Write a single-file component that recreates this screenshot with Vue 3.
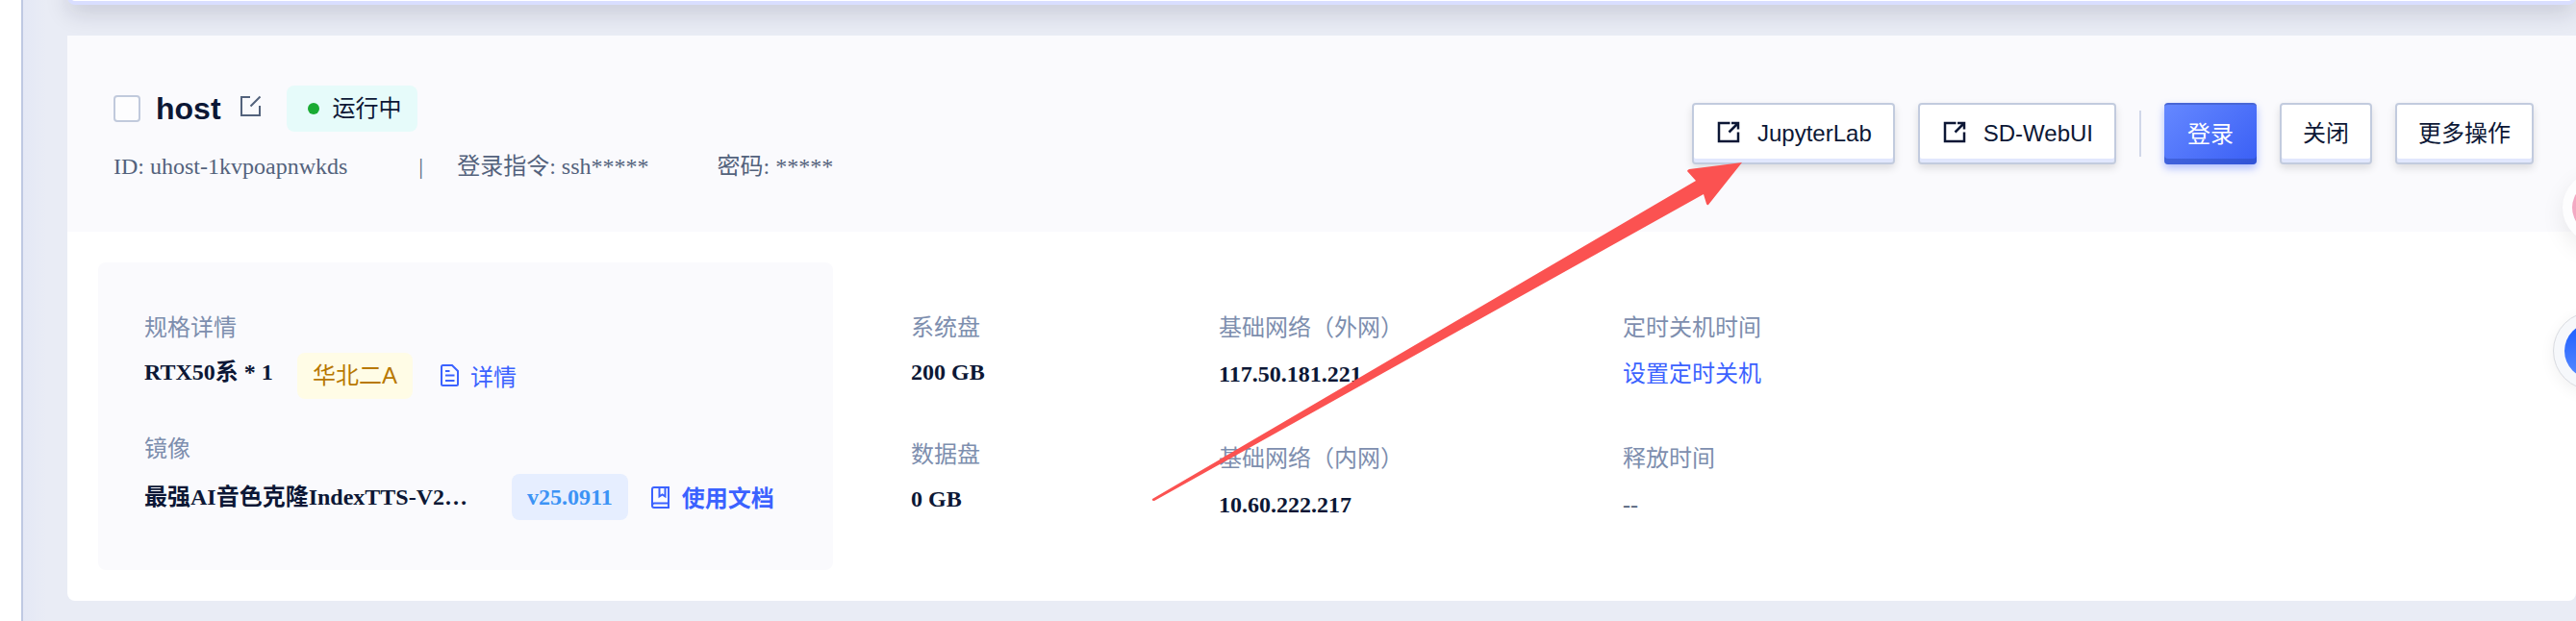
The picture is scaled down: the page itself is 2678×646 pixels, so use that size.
<script setup>
const disks = [
  { label: '系统盘', value: '200 GB' },
  { label: '数据盘', value: '0 GB' },
]
const networks = [
  { label: '基础网络（外网）', value: '117.50.181.221' },
  { label: '基础网络（内网）', value: '10.60.222.217' },
]
const tools = ['JupyterLab', 'SD-WebUI']
</script>

<template>
  <div class="page">
    <div class="rail"></div>
    <main class="content">
      <div class="previous-card"></div>

      <article class="card">
        <header class="card-header">
          <div class="identity">
            <div class="title-row">
              <input id="pick-host" class="pick" type="checkbox" aria-label="host" />
              <label for="pick-host" class="name">host</label>
              <button class="icon-button" type="button" aria-label="编辑">
                <svg class="icon" viewBox="0 0 28 28">
                  <path d="M14 2H5V21H24V11M14.500 11.500L24.500 1.500" />
                </svg>
              </button>
              <span class="status"><i class="dot"></i>运行中</span>
            </div>
            <div class="meta-row">
              <span>ID: uhost-1kvpoapnwkds</span>
              <span class="bar">|</span>
              <span class="command">登录指令: ssh*****</span>
              <span>密码: *****</span>
            </div>
          </div>

          <div class="actions">
            <button v-for="tool in tools" :key="tool" class="btn" type="button">
              <svg class="icon strong" viewBox="0 0 28 28">
                <path d="M15.500 3H4V22H24V12.500M14.500 12.500L23.500 3.500M17 3H24V9.500" />
              </svg>
              {{ tool }}
            </button>
            <span class="divider"></span>
            <button class="btn primary" type="button">登录</button>
            <button class="btn" type="button">关闭</button>
            <button class="btn" type="button">更多操作</button>
          </div>
        </header>

        <div class="card-body">
          <section class="spec">
            <div class="label">规格详情</div>
            <div class="spec-row">
              <span class="value model">RTX50系 * 1</span>
              <span class="tag zone">华北二A</span>
              <a class="link detail" href="#">
                <svg class="icon" viewBox="0 0 28 28">
                  <path d="M7.500 1H17L23 7V20.500Q23 22 21.500 22H7.500Q6 22 6 20.500V2.500Q6 1 7.500 1ZM10 7H14.500M10 11.500H19.500M10 17H19.500" />
                </svg>
                详情
              </a>
            </div>
            <div class="label image-label">镜像</div>
            <div class="spec-row">
              <span class="value image-name">最强AI音色克隆IndexTTS-V2…</span>
              <span class="tag version">v25.0911</span>
              <a class="link docs" href="#">
                <svg class="icon narrow" viewBox="0 0 24 28">
                  <path d="M3 2H18V23H3Q1 23 1 21V4Q1 2 3 2ZM1 21Q1 18.500 3 18.500H18M8.500 2V11.500L11.500 9.500L14.500 11.500V2" />
                </svg>
                使用文档
              </a>
            </div>
          </section>

          <section class="column disks">
            <div v-for="item in disks" :key="item.label" class="item">
              <div class="label">{{ item.label }}</div>
              <div class="value">{{ item.value }}</div>
            </div>
          </section>
          <section class="column">
            <div v-for="item in networks" :key="item.label" class="item">
              <div class="label">{{ item.label }}</div>
              <div class="value">{{ item.value }}</div>
            </div>
          </section>
          <section class="column">
            <div class="item">
              <div class="label">定时关机时间</div>
              <a class="link" href="#">设置定时关机</a>
            </div>
            <div class="item">
              <div class="label">释放时间</div>
              <div class="plain">--</div>
            </div>
          </section>
        </div>
      </article>
    </main>

    <svg class="arrow" viewBox="0 0 620 360" aria-hidden="true">
      <path d="M7 358L572 27L563 17Q563 16 565 15L620 8L585 52Q584 53 583 51L580 41L9 360Q6 360 7 358Z" />
    </svg>
    <button class="float promo" type="button" aria-label="活动"><i></i></button>
    <button class="float support" type="button" aria-label="客服"><i></i></button>
  </div>
</template>

<style>
body {
  margin: 0;
  background: #e9ecf5;
}
</style>

<style scoped>
.page {
  --sans: "Liberation Sans", "Noto Sans CJK SC", sans-serif;
  --serif: "Liberation Serif", "Noto Sans CJK SC", serif;
  --ink: #0c1735;
  --slate: #53627c;
  --blue: #3b62ff;
  position: relative;
  display: flex;
  min-height: 100vh;
  overflow: hidden;
  font: 24px/36px var(--serif);
  color: var(--ink);
}
.page * {
  box-sizing: border-box;
}
.rail {
  width: 24px;
  flex: none;
  background: #fff;
  border-right: 2px solid #bfc9e2;
}
.content {
  flex: 1;
  min-width: 0;
  padding-left: 46px;
  background: linear-gradient(90deg, #e4e8f5, #e9ecf5 24px);
}
.previous-card {
  height: 24px;
  margin-top: -19px;
  margin-bottom: 32px;
  background: #fff;
  border: 4px solid #d9deff;
  border-radius: 8px;
  box-shadow: 0 8px 24px rgba(20, 20, 50, 0.16);
}
.card {
  position: relative;
  background: #fff;
  border-radius: 0 0 8px 8px;
}
.card-header {
  display: flex;
  align-items: center;
  justify-content: space-between;
  padding: 52px 44px 52px 48px;
  background: #fafafd;
}
.title-row {
  display: flex;
  align-items: center;
  height: 48px;
}
.pick {
  appearance: none;
  width: 28px;
  height: 28px;
  margin: 0 16px 0 0;
  border: 2px solid #c1cadc;
  border-radius: 4px;
  background: #fdfdfe;
}
.name {
  font: bold 32px/48px var(--sans);
}
.icon {
  flex: none;
  width: 28px;
  height: 28px;
  fill: none;
  stroke: currentColor;
  stroke-width: 2;
}
.icon.strong {
  stroke-width: 2.5;
}
.icon.narrow {
  width: 24px;
}
.icon-button {
  display: flex;
  margin: 0 24px 0 16px;
  padding: 0;
  border: 0;
  background: none;
  color: var(--slate);
}
.status {
  display: flex;
  align-items: center;
  height: 48px;
  padding: 0 16px 0 22px;
  border-radius: 8px;
  background: #e6fbfa;
  font-family: var(--sans);
}
.dot {
  width: 12px;
  height: 12px;
  margin-right: 14px;
  border-radius: 50%;
  background: #1aab33;
}
.meta-row {
  display: flex;
  margin-top: 20px;
  line-height: 32px;
  color: var(--slate);
}
.bar {
  margin: 0 35px 0 74px;
}
.command {
  margin-right: 71px;
}
.actions {
  display: flex;
  align-items: center;
  gap: 24px;
}
.btn {
  display: flex;
  align-items: center;
  gap: 16px;
  height: 64px;
  padding: 0 22px;
  border: 2px solid #c2cbde;
  border-radius: 4px;
  background: #fff;
  box-shadow: inset 0 -4px #e1e7fd, 0 4px 8px rgba(0, 0, 0, 0.12);
  font: 24px/36px var(--sans);
  color: var(--ink);
}
.btn.primary {
  border-width: 2px 0 0;
  border-color: #4866d6;
  padding: 0 24px;
  background: linear-gradient(135deg, #6588ff, #3a5ff5);
  box-shadow: inset 0 -6px rgba(40, 70, 180, 0.45), 0 4px 8px rgba(59, 98, 255, 0.4);
  color: #fff;
}
.divider {
  width: 2px;
  height: 48px;
  background: #d1d7e9;
}
.card-body {
  display: grid;
  grid-template-columns: 764px 401px 420px 1fr;
  padding: 32px;
}
.spec {
  padding: 50px 48px 52px;
  border-radius: 8px;
  background: #fafafd;
}
.label {
  color: #7d8eae;
}
.value {
  font-weight: bold;
}
.spec-row {
  display: flex;
  align-items: center;
  gap: 24px;
  height: 48px;
  margin-top: 8px;
}
.image-label {
  margin-top: 34px;
}
.model {
  align-self: flex-start;
  min-width: 135px;
  line-height: 40px;
}
.image-name {
  width: 358px;
  white-space: nowrap;
}
.tag {
  padding: 0 16px;
  border-radius: 8px;
  line-height: 48px;
}
.zone {
  background: #fffce6;
  color: #b87800;
  font-family: var(--sans);
}
.version {
  background: #e6eeff;
  color: #3c93f5;
  font-weight: bold;
}
.link {
  display: flex;
  align-items: center;
  gap: 8px;
  color: var(--blue);
  font-family: var(--sans);
  text-decoration: none;
}
.detail {
  align-self: flex-end;
  line-height: 44px;
}
.docs {
  align-self: flex-end;
  line-height: 44px;
  font-weight: bold;
}
.column {
  display: flex;
  flex-direction: column;
  gap: 52px;
  padding-top: 50px;
}
.item {
  display: flex;
  flex-direction: column;
  gap: 12px;
}
.disks {
  gap: 50px;
  padding-left: 81px;
}
.disks .item {
  gap: 10px;
}
.plain {
  color: var(--slate);
}
.arrow {
  position: absolute;
  left: 1191px;
  top: 161px;
  width: 620px;
  height: 360px;
  overflow: visible;
  fill: #fb5251;
  pointer-events: none;
}
.float {
  position: absolute;
  display: flex;
  align-items: center;
  justify-content: center;
  padding: 0;
  border: 0;
  border-radius: 50%;
}
.promo {
  top: 179px;
  right: -60px;
  width: 74px;
  height: 74px;
  background: #fdfdfe;
  box-shadow: 0 8px 24px rgba(0, 0, 0, 0.08);
}
.promo i {
  width: 54px;
  height: 54px;
  border-radius: 50%;
  background: #f3a9c3;
}
.support {
  top: 324px;
  right: -58px;
  width: 82px;
  height: 82px;
  border: 1px solid #d9dbe0;
  background: #f6f8fb;
  box-shadow: 0 4px 16px rgba(0, 0, 0, 0.06);
}
.support i {
  flex: none;
  width: 58px;
  height: 58px;
  border-radius: 50%;
  background: linear-gradient(#1a5cff, #5a8cff);
}
</style>
